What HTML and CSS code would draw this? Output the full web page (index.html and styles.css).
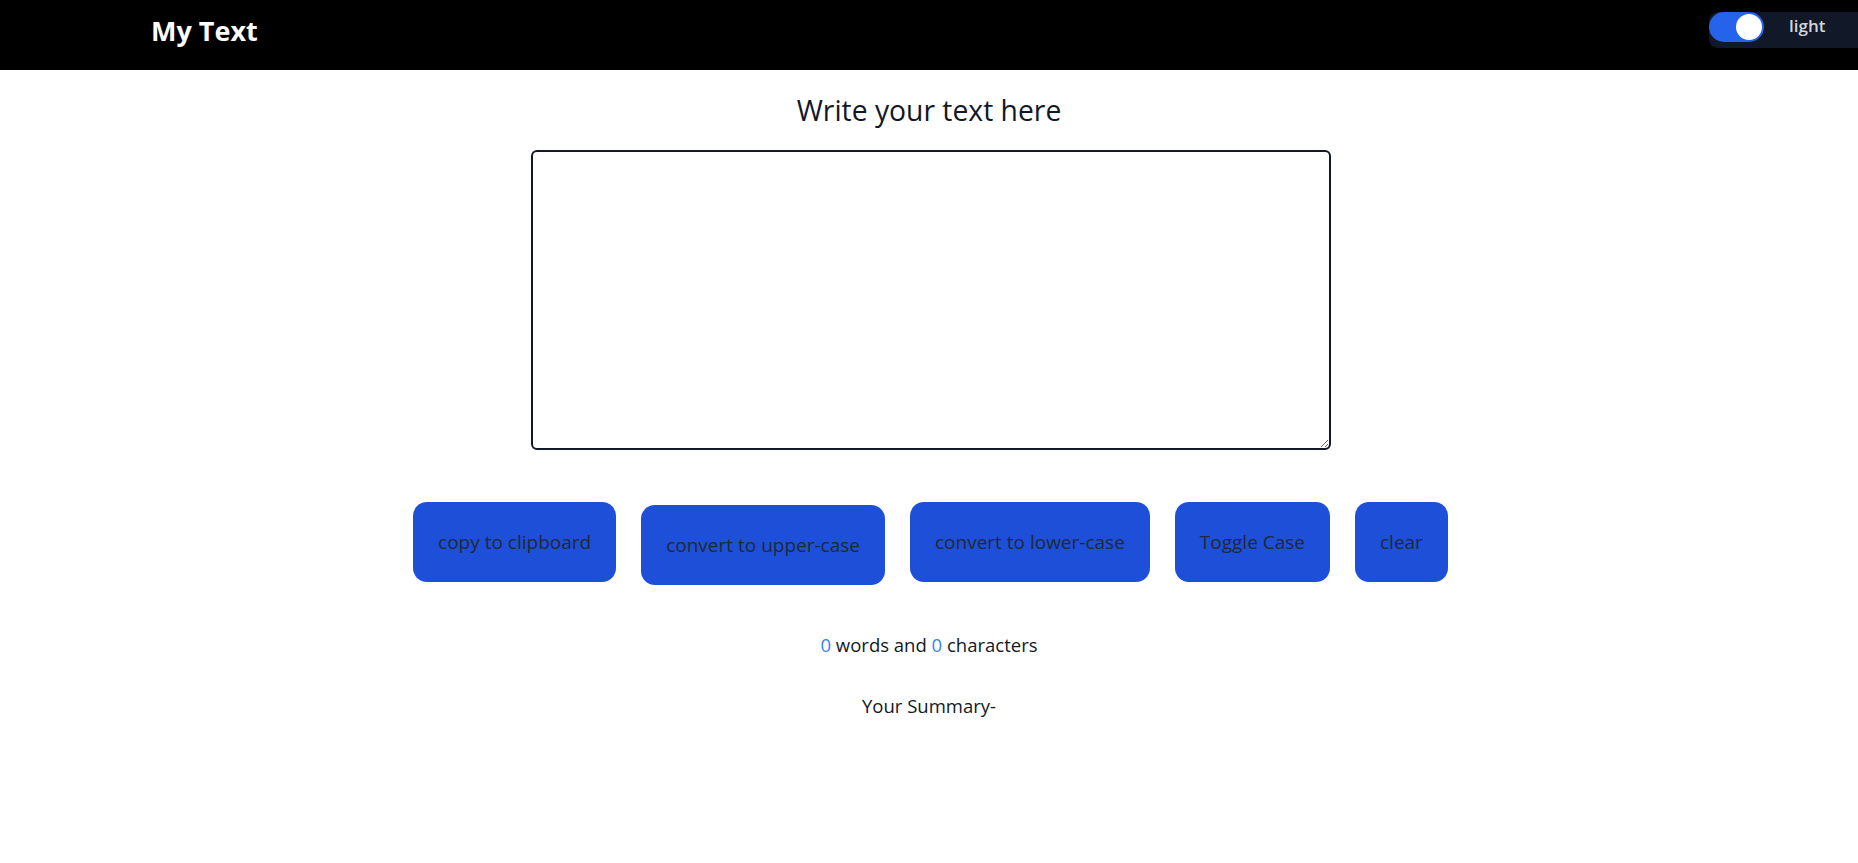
FILE: index.html
```html
<!DOCTYPE html>
<html lang="en">
<head>
<meta charset="utf-8">
<title>My Text</title>
<link rel="stylesheet" href="styles.css">
</head>
<body>
<nav class="navbar">
  <div class="brand">My Text</div>
  <div class="mode">
    <span class="switch"><span class="knob"></span></span>
    <span class="mode-label">light</span>
  </div>
</nav>
<main class="main">
  <h1 class="title">Write your text here</h1>
  <textarea class="editor"></textarea>
  <div class="actions">
    <button class="btn">copy to clipboard</button>
    <button class="btn btn-low">convert to upper-case</button>
    <button class="btn">convert to lower-case</button>
    <button class="btn">Toggle Case</button>
    <button class="btn">clear</button>
  </div>
  <p class="stats"><span class="num">0</span> words and <span class="num">0</span> characters</p>
  <p class="summary">Your Summary-</p>
</main>
</body>
</html>
```
FILE: styles.css
```css
* { box-sizing: border-box; }
html, body { margin: 0; padding: 0; background: #fff; }
body {
  font-family: "Open Sans", "Noto Sans", sans-serif;
  color: #111827;
}
.navbar {
  height: 70px;
  background: #000;
  display: flex;
  align-items: flex-start;
  justify-content: space-between;
  padding-left: 151px;
}
.brand {
  color: #fff;
  font-weight: 700;
  font-size: 27px;
  line-height: 32px;
  margin-top: 15px;
}
.mode {
  margin-top: 12px;
  width: 149px;
  height: 36px;
  background: #111827;
  border-radius: 9px 0 0 9px;
  display: flex;
  align-items: flex-start;
}
.switch {
  width: 55px;
  height: 30px;
  border-radius: 15px;
  background: #2563eb;
  display: flex;
  align-items: center;
  justify-content: flex-end;
  padding-right: 2px;
}
.knob {
  width: 26px;
  height: 26px;
  border-radius: 50%;
  background: #fff;
}
.mode-label {
  margin-left: 25px;
  color: #d1d5db;
  font-weight: 600;
  font-size: 17px;
  line-height: 24px;
  margin-top: 2px;
}
.main {
  display: flex;
  flex-direction: column;
  align-items: center;
}
.title {
  margin: 22px 0 0;
  font-weight: 400;
  font-size: 28.3px;
  line-height: 36px;
  color: #111827;
}
.editor {
  display: block;
  margin: 22px 0 0 3px;
  width: 800px;
  height: 300px;
  border: 2px solid #111827;
  border-radius: 6px;
  resize: both;
  background: #fff;
}
.actions {
  margin-top: 52px;
  display: flex;
  align-items: flex-start;
  gap: 25px;
  padding-left: 3px;
}
.btn {
  font-family: inherit;
  background: #1e4fd8;
  color: #1f2937;
  border: none;
  border-radius: 14px;
  font-size: 19px;
  line-height: 28px;
  padding: 26px 25px;
  cursor: pointer;
}
.btn-low { margin-top: 3px; }
.stats {
  margin: 46px 0 0;
  font-size: 18.5px;
  line-height: 28px;
  color: #111827;
}
.num { color: #3b82f6; }
.summary {
  margin: 33px 0 0;
  font-size: 18.5px;
  line-height: 28px;
  color: #111827;
}
```
